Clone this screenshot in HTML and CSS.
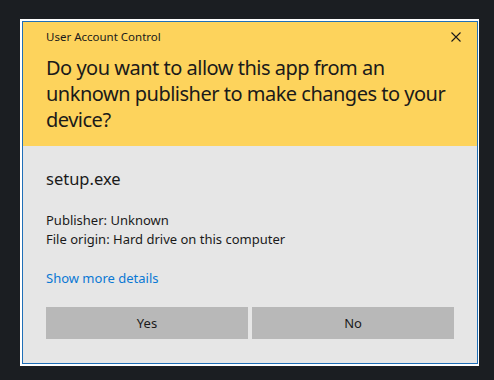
FILE: index.html
```html
<!DOCTYPE html>
<html lang="en">
<head>
  <meta charset="UTF-8">
  <meta name="viewport" content="width=device-width, initial-scale=1.0">
  <title>User Account Control</title>
  <link rel="stylesheet" href="styles.css">
</head>
<body>
  <div class="frame">
    <div class="dialog">
      <div class="header">
        <div class="title-row">
          <span class="caption">User Account Control</span>
          <svg class="close" width="10" height="10" viewBox="0 0 10 10">
            <path d="M0.5 0.5 L9.5 9.5 M9.5 0.5 L0.5 9.5" stroke="#1a1a1a" stroke-width="1.1" fill="none"/>
          </svg>
        </div>
        <h1 class="question">Do you want to allow this app from an unknown publisher to make changes to your device?</h1>
      </div>
      <div class="content">
        <p class="app-name">setup.exe</p>
        <p class="info">Publisher: Unknown<br>File origin: Hard drive on this computer</p>
        <a class="details" href="#">Show more details</a>
        <div class="buttons">
          <button class="btn">Yes</button>
          <button class="btn">No</button>
        </div>
      </div>
    </div>
  </div>
</body>
</html>
```

FILE: styles.css
```css
body {
  margin: 0;
  background: #1b1e22;
  font-family: "Noto Sans", Arial, sans-serif;
  color: #1a1a1a;
}
.frame {
  margin: 19px 0 0 20px;
  width: 456px;
  height: 343px;
  background: #ffffff;
  padding: 2px 1px 2px 2px;
}
.dialog {
  height: 341px;
  border: 1px solid #1f6fb8;
  background: #e6e6e6;
}
.header {
  background: #fdd35c;
  height: 124px;
  box-sizing: border-box;
  padding: 7px 23px 0 23px;
}
.title-row {
  display: flex;
  justify-content: space-between;
  align-items: center;
  height: 16px;
}
.caption {
  font-size: 11.5px;
  line-height: 16px;
}
.close {
  margin-right: -7px;
}
.question {
  margin: 10px 0 0 0;
  font-size: 20px;
  line-height: 26px;
  font-weight: normal;
  letter-spacing: -0.5px;
  width: 405px;
}
.content {
  padding: 22px 23px 0 23px;
}
.app-name {
  margin: 0;
  font-size: 16.5px;
  line-height: 22px;
}
.info {
  margin: 21px 0 0 0;
  font-size: 13px;
  line-height: 19px;
}
.details {
  display: block;
  margin-top: 20px;
  font-size: 13px;
  line-height: 19px;
  color: #0a78d4;
  text-decoration: none;
}
.buttons {
  display: flex;
  gap: 4px;
  margin-top: 19px;
}
.btn {
  flex: 1;
  height: 32px;
  border: none;
  background: #b8b8b8;
  font-family: inherit;
  font-size: 13px;
  color: #1a1a1a;
}
```
